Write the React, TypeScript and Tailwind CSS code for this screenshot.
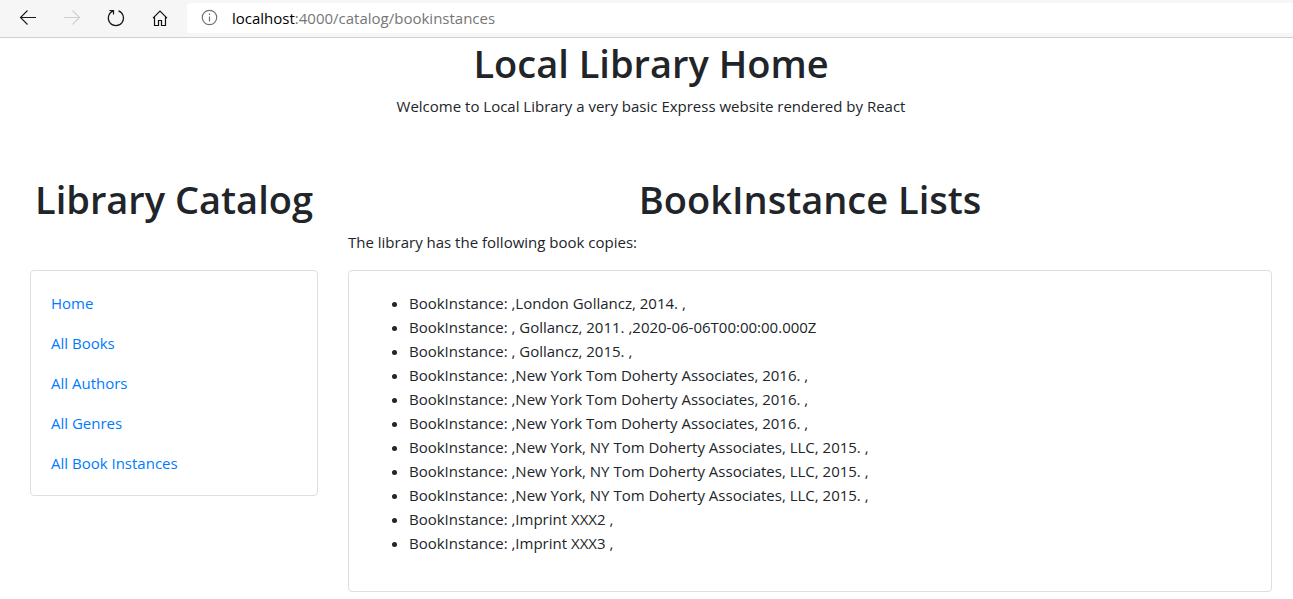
const links = ["Home", "All Books", "All Authors", "All Genres", "All Book Instances"];

const copies = [
  "BookInstance: ,London Gollancz, 2014. ,",
  "BookInstance: , Gollancz, 2011. ,2020-06-06T00:00:00.000Z",
  "BookInstance: , Gollancz, 2015. ,",
  "BookInstance: ,New York Tom Doherty Associates, 2016. ,",
  "BookInstance: ,New York Tom Doherty Associates, 2016. ,",
  "BookInstance: ,New York Tom Doherty Associates, 2016. ,",
  "BookInstance: ,New York, NY Tom Doherty Associates, LLC, 2015. ,",
  "BookInstance: ,New York, NY Tom Doherty Associates, LLC, 2015. ,",
  "BookInstance: ,New York, NY Tom Doherty Associates, LLC, 2015. ,",
  "BookInstance: ,Imprint XXX2 ,",
  "BookInstance: ,Imprint XXX3 ,",
];

const heading = "text-center text-[38px] leading-[50px] font-semibold whitespace-nowrap";

function BrowserBar() {
  return (
    <header className="flex h-[38px] items-center border-b border-[#cfcfcf] bg-[#f6f6f6]">
      <nav aria-label="Browser" className="flex shrink-0 items-center gap-6 pr-[17px] pl-[18px]">
        <button type="button" aria-label="Back" className="text-[#1a1a1a]">
          <svg width="20" height="20" viewBox="0 0 20 20" fill="none" stroke="currentColor" strokeWidth="1.1">
            <path d="M18 8.5H2.7M9.500 1.500l-7 7 7 7" />
          </svg>
        </button>
        <button type="button" aria-label="Forward" disabled className="text-[#cfcfcf]">
          <svg width="20" height="20" viewBox="0 0 20 20" fill="none" stroke="currentColor" strokeWidth="1.1">
            <path d="M2 8.5h15.3M10.500 1.500l7 7-7 7" />
          </svg>
        </button>
        <button type="button" aria-label="Refresh" className="text-[#1a1a1a]">
          <svg width="20" height="20" viewBox="0 0 20 20" fill="none" stroke="currentColor" strokeWidth="1.2">
            <path d="M12.500 1.900A7.600 7.600 0 1 1 7.300 1.900M3.500 1.500H7.500V5.500" />
          </svg>
        </button>
        <button type="button" aria-label="Home" className="text-[#111111]">
          <svg width="20" height="20" viewBox="0 0 20 20" fill="none" stroke="currentColor" strokeWidth="1.2">
            <path d="M3 9.2L10 2.200l7 7M4.500 8v8.500h4v-5h3v5h4V8" />
          </svg>
        </button>
      </nav>
      <div className="mb-px flex h-[30px] min-w-0 flex-1 items-center gap-3 rounded-l bg-white pl-[13px]">
        <svg className="shrink-0" width="20" height="20" viewBox="0 0 20 20" fill="none" stroke="#717171" strokeWidth="1.2">
          <circle cx="9.5" cy="9.5" r="7.2" />
          <path d="M9.500 8.500v5M9.500 5.500v1.500" />
        </svg>
        <p className="text-[15px] leading-6 text-[#767676]">
          <span className="text-black">localhost</span>:4000/catalog/bookinstances
        </p>
      </div>
    </header>
  );
}

export default function App() {
  return (
    <div className="min-h-screen bg-white font-['Open_Sans','Noto_Sans',sans-serif] text-[15px] leading-6 text-[#212529]">
      <BrowserBar />
      <div className="pr-[6px] pb-[7px] pl-[15px]">
        <div className="mb-14 text-center">
          <h1 className={heading}>Local Library Home</h1>
          <p className="mt-1.5">Welcome to Local Library a very basic Express website rendered by React</p>
        </div>
        <div className="grid grid-cols-4">
          <aside className="px-[15px]">
            <h1 className={heading}>Library Catalog</h1>
            <nav aria-label="Catalog" className="mt-[46px] flex flex-col items-start gap-4 rounded border border-[#dfdfdf] p-5">
              {links.map((label) => (
                <a key={label} href="#" className="text-[#007bff]">
                  {label}
                </a>
              ))}
            </nav>
          </aside>
          <main className="col-span-3 px-[15px]">
            <h1 className={heading}>BookInstance Lists</h1>
            <p className="mt-1.5">The library has the following book copies:</p>
            <div className="mt-4 rounded border border-[#dfdfdf] p-5">
              <ul className="mb-4 list-disc pl-10">
                {copies.map((copy, i) => (
                  <li key={i}>{copy}</li>
                ))}
              </ul>
            </div>
          </main>
        </div>
      </div>
    </div>
  );
}
